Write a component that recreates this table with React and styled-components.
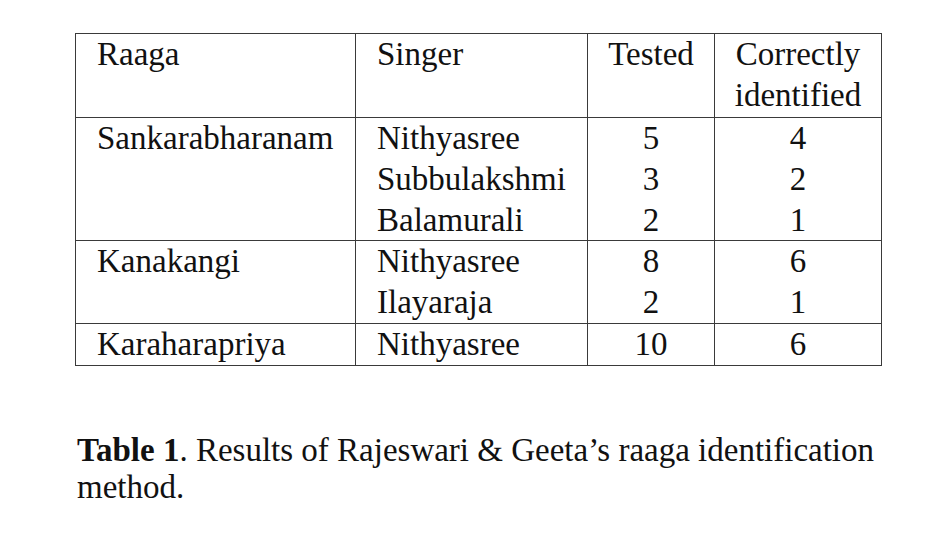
import React from "react"
import styled, { createGlobalStyle } from "styled-components"

const GlobalStyle = createGlobalStyle`
  html, body {
    margin: 0;
    padding: 0;
    background: #ffffff;
  }
  body {
    font-family: "Liberation Serif", "Times New Roman", serif;
    color: #111;
  }
`

const Page = styled.div`
  width: 952px;
  height: 548px;
  padding: 33px 0 0 75px;
  box-sizing: border-box;
`

const Table = styled.table`
  border-collapse: collapse;
  table-layout: fixed;
  width: 806px;
  font-size: 33px;
  line-height: 40.8px;
  border: 1.5px solid #3a3a3a;
`

const Col = styled.col`
  width: ${props => props.w}px;
`

const Cell = styled.td`
  padding: 0 0 0 ${props => props.center ? 0 : 21}px;
  text-align: ${props => props.center ? "center" : "left"};
  vertical-align: top;
  border-left: 1.5px solid #3a3a3a;
  border-right: 1.5px solid #3a3a3a;
  border-top: ${props => props.groupStart ? "1.5px solid #3a3a3a" : "none"};
  white-space: nowrap;
`

const HeadCell = styled.th`
  padding: 0 0 1.5px ${props => props.center ? 0 : 21}px;
  text-align: ${props => props.center ? "center" : "left"};
  vertical-align: top;
  font-weight: normal;
  border: 1.5px solid #3a3a3a;
`

const Caption = styled.p`
  margin: 66px 0 0 2px;
  width: 830px;
  font-size: 33px;
  line-height: 37.5px;
`

const Label = styled.b`
  font-weight: bold;
`

const groups = [
  {
    raaga: "Sankarabharanam",
    rows: [
      ["Nithyasree", 5, 4],
      ["Subbulakshmi", 3, 2],
      ["Balamurali", 2, 1],
    ],
  },
  {
    raaga: "Kanakangi",
    rows: [
      ["Nithyasree", 8, 6],
      ["Ilayaraja", 2, 1],
    ],
  },
  {
    raaga: "Karaharapriya",
    rows: [["Nithyasree", 10, 6]],
  },
]

const App = () => {
  return (
    <Page>
      <GlobalStyle />
      <Table>
        <colgroup>
          <Col w={280} />
          <Col w={232} />
          <Col w={127} />
          <Col w={167} />
        </colgroup>
        <thead>
          <tr>
            <HeadCell>Raaga</HeadCell>
            <HeadCell>Singer</HeadCell>
            <HeadCell center>Tested</HeadCell>
            <HeadCell center>
              Correctly
              <br />
              identified
            </HeadCell>
          </tr>
        </thead>
        <tbody>
          {groups.map(g =>
            g.rows.map((r, i) => (
              <tr key={g.raaga + r[0]}>
                {i === 0 && (
                  <Cell groupStart rowSpan={g.rows.length}>
                    {g.raaga}
                  </Cell>
                )}
                <Cell groupStart={i === 0}>{r[0]}</Cell>
                <Cell center groupStart={i === 0}>{r[1]}</Cell>
                <Cell center groupStart={i === 0}>{r[2]}</Cell>
              </tr>
            ))
          )}
        </tbody>
      </Table>
      <Caption>
        <Label>Table 1</Label>. Results of Rajeswari &amp; Geeta’s raaga identification method.
      </Caption>
    </Page>
  )
}

export default App
